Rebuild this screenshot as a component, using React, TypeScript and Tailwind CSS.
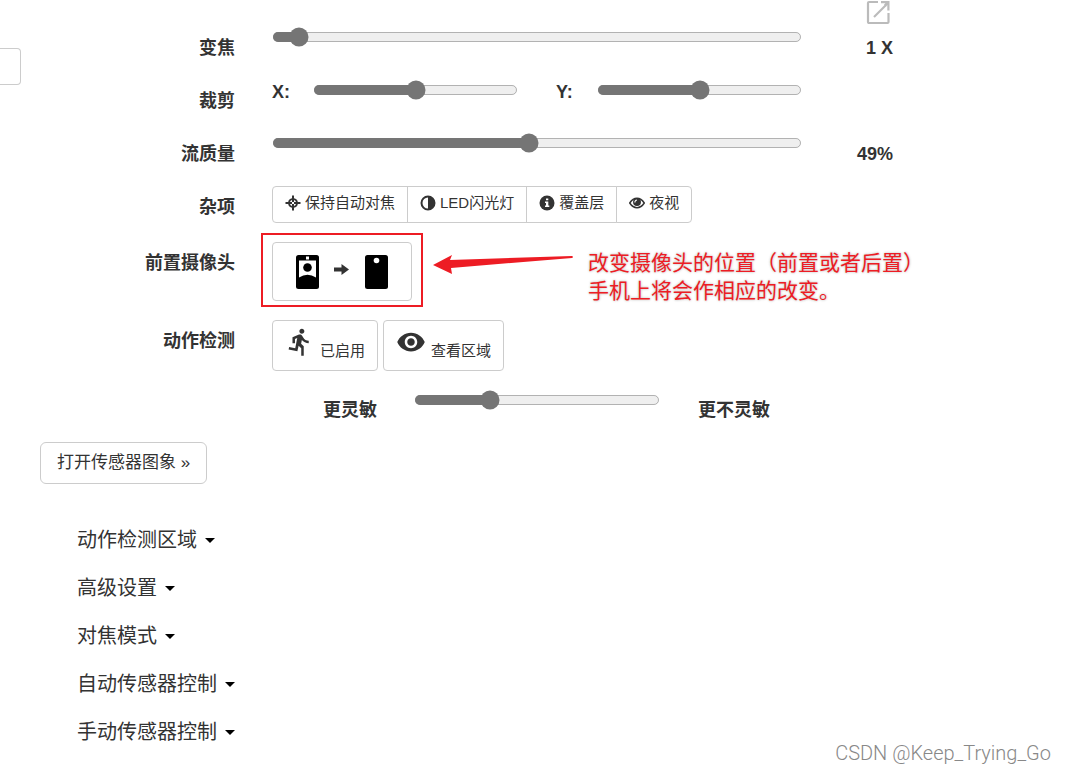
import { useState } from 'react'
import { MdDirectionsRun, MdVisibility } from 'react-icons/md'

const smallButton = 'flex items-center border border-[#ccc] bg-white px-3 pb-[3px] text-[15px] leading-5'

const menus = ['动作检测区域', '高级设置', '对焦模式', '自动传感器控制', '手动传感器控制']

function Slider({ label, id, initial }: { label?: string; id: string; initial: number }) {
  const [value, setValue] = useState(initial)
  return (
    <input
      id={id}
      type="range"
      min={0}
      max={100}
      step={0.1}
      aria-label={label}
      value={value}
      onChange={(e) => setValue(Number(e.target.value))}
      className="block h-4 w-full min-w-0 flex-1 accent-[#757575] [zoom:1.25]"
    />
  )
}

interface RowProps {
  label?: string
  htmlFor?: string
  value?: string
  children: React.ReactNode
}

function Row({ label, htmlFor, value, children }: RowProps) {
  return (
    <div className="flex min-h-[34px] items-start">
      <label htmlFor={htmlFor} className="w-[214px] shrink-0 pt-2 text-right text-[18px] leading-[26px] font-bold">
        {label}
      </label>
      <div className="ml-[37px] flex min-w-0 flex-1">{children}</div>
      <output className="mr-[172px] w-[91px] shrink-0 pt-2 text-right text-[18px] leading-[26px] font-bold">
        {value}
      </output>
    </div>
  )
}

function PopOutIcon() {
  return (
    <svg viewBox="0 0 24 24" className="size-6" fill="none" stroke="#bbb" strokeWidth="2.2">
      <path d="M12 2H3Q2 2 2 3V22Q2 23 3 23H21Q22.500 23 22.500 22V13" />
      <path d="M8 17L20 5" />
      <path d="M15 1h8.500v9.500h-2.200V5L20 6.500 18 4.500 19.500 3.200H15z" fill="#bbb" stroke="none" />
    </svg>
  )
}

function FocusIcon() {
  return (
    <svg viewBox="0 0 16 16" className="size-4" fill="currentColor">
      <path d="M7 0.500h2V3.200Q12.300 3.700 12.800 7H15.500v2h-2.700Q12.300 12.300 9 12.800v2.700H7v-2.700Q3.700 12.300 3.200 9H0.500V7h2.700Q3.700 3.700 7 3.200z" />
      <path d="M7 5v2H5Q5.400 5.400 7 5zM9 5Q10.600 5.400 11 7H9zM11 9Q10.600 10.600 9 11V9zM7 11Q5.400 10.600 5 9h2zM7 7h2v2H7z" fill="#fff" />
    </svg>
  )
}

function ContrastIcon() {
  return (
    <svg viewBox="0 0 16 16" className="size-4">
      <circle cx="8" cy="8" r="6.500" fill="none" stroke="currentColor" strokeWidth="2" />
      <path d="M8 1.500a6.500 6.500 0 0 1 0 13z" fill="currentColor" />
    </svg>
  )
}

function InfoIcon() {
  return (
    <svg viewBox="0 0 16 16" className="size-4">
      <circle cx="8" cy="8" r="7.500" fill="currentColor" />
      <path d="M7 3.500h2.300v1.800H7zM6 6.500h3.300v4h1V12H6v-1.500h1V8H6z" fill="#fff" />
    </svg>
  )
}

function EyeIcon() {
  return (
    <svg viewBox="0 0 17 16" className="h-4 w-4">
      <path d="M0.800 8Q4 3 8.500 3T16.200 8Q13 13 8.500 13T0.800 8z" fill="none" stroke="currentColor" strokeWidth="1.600" />
      <circle cx="8.500" cy="7" r="4.200" fill="currentColor" />
      <path d="M6.300 7.500a2.200 2.200 0 0 1 2-2.500" fill="none" stroke="#fff" strokeWidth="1.200" />
    </svg>
  )
}

function CameraSwapIcon() {
  return (
    <svg viewBox="0 0 92 36" className="h-9 w-[92px]">
      <rect x="0" y="1" width="23" height="34" rx="2.500" />
      <path d="M3 6.500h17v17Q11.500 18 3 23.500z" fill="#fff" />
      <rect x="10" y="2.500" width="3" height="3" fill="#fff" />
      <circle cx="11.500" cy="13.500" r="4.300" />
      <path d="M38 13.500h7.500V10l7.500 5.500-7.500 5.500v-3.500H38z" fill="#333" />
      <rect x="69" y="1" width="23" height="34" rx="2.500" />
      <circle cx="80.500" cy="6.500" r="2.800" fill="#fff" />
    </svg>
  )
}

export default function App() {
  return (
    <main className="flex min-h-screen flex-col overflow-x-hidden bg-white font-['Liberation_Sans','Noto_Sans_CJK_SC',sans-serif] text-[#333]">
      <div className="flex items-start">
        <div className="w-[21px] shrink-0 pt-12">
          <button aria-label="展开" className="block h-[37px] w-full rounded-r border border-l-0 border-[#ccc]" />
        </div>

        <section className="min-w-0 flex-1">
          <div className="flex h-[27px] justify-end pr-[175px]">
            <a href="#popout" aria-label="弹出">
              <PopOutIcon />
            </a>
          </div>

          <div className="flex flex-col gap-[19px]">
            <Row label="变焦" htmlFor="zoom" value="1 X">
              <Slider id="zoom" initial={3.4} />
            </Row>

            <Row label="裁剪">
              <div className="flex flex-1 gap-[38px]">
                <div className="flex flex-1 items-start">
                  <label htmlFor="crop-x" className="w-[41px] text-[18px] leading-6 font-bold">X:</label>
                  <Slider id="crop-x" initial={50} />
                </div>
                <div className="flex flex-1 items-start">
                  <label htmlFor="crop-y" className="w-[41px] text-[18px] leading-6 font-bold">Y:</label>
                  <Slider id="crop-y" initial={50} />
                </div>
              </div>
            </Row>

            <Row label="流质量" htmlFor="quality" value="49%">
              <Slider id="quality" initial={48.5} />
            </Row>

            <Row label="杂项">
              <div className="flex h-[37px] whitespace-nowrap">
                <button className={`${smallButton} gap-1 rounded-l`}><FocusIcon />保持自动对焦</button>
                <button className={`${smallButton} -ml-px gap-1`}><ContrastIcon />LED闪光灯</button>
                <button className={`${smallButton} -ml-px gap-1`}><InfoIcon />覆盖层</button>
                <button className={`${smallButton} -ml-px gap-1 rounded-r`}><EyeIcon />夜视</button>
              </div>
            </Row>

            <Row label="前置摄像头">
              <div className="relative">
                <button aria-label="切换摄像头" className="flex h-[59px] w-[140px] items-center justify-center rounded border border-[#ccc]">
                  <CameraSwapIcon />
                </button>
                <div className="pointer-events-none absolute -inset-x-[11px] -top-[9px] -bottom-[6px] border-2 border-[#ed1c24]" />
                <svg viewBox="0 0 140 20" className="absolute top-3 left-[161px] h-5 w-[140px]" fill="#ed1c24">
                  <path d="M0 11L19 1l-2 5L139 2q2 1 0 2L18 14l1 6z" />
                </svg>
                <p className="absolute top-[7px] left-[316px] text-[21px] leading-7 whitespace-nowrap text-[#ed1c24] [text-shadow:0_0_2px_#ccc,0_0_3px_#ccc]">
                  改变摄像头的位置（前置或者后置）
                  <br />
                  手机上将会作相应的改变。
                </p>
              </div>
            </Row>

            <Row label="动作检测">
              <div className="flex h-[51px] gap-[5px] text-[15px] leading-5 whitespace-nowrap">
                <button className="flex items-start gap-[5px] rounded border border-[#ccc] px-3">
                  <MdDirectionsRun className="mt-[6px] size-[30px]" />
                  <span className="mt-5">已启用</span>
                </button>
                <button className="flex items-start gap-[5px] rounded border border-[#ccc] px-3">
                  <MdVisibility className="mt-[6px] size-[30px]" />
                  <span className="mt-5">查看区域</span>
                </button>
              </div>
            </Row>

            <Row>
              <div className="flex flex-1 items-start text-[18px] leading-6 font-bold">
                <span className="w-[105px] pt-2 text-right">更灵敏</span>
                <div className="ml-[37px] flex min-w-0 flex-1">
                  <Slider id="sensitivity" label="灵敏度" initial={29} />
                </div>
                <span className="ml-[38px] w-[104px] pt-2">更不灵敏</span>
              </div>
            </Row>
          </div>
        </section>
      </div>

      <div className="px-10 pt-[18px]">
        <button className="h-[42px] rounded-md border border-[#ccc] px-4 text-[17px] leading-6">
          打开传感器图象 »
        </button>
      </div>

      <nav className="flex flex-col items-start px-[77px] pt-8 text-[20px]">
        {menus.map((name) => (
          <button key={name} className="flex h-12 items-center gap-2">
            {name}
            <svg viewBox="0 0 10 5" className="h-[5px] w-[10px]">
              <path d="M0 0h10L5 5z" fill="#000" />
            </svg>
          </button>
        ))}
      </nav>

      <footer className="pointer-events-none absolute right-[14px] bottom-2 font-[Roboto,sans-serif] text-[20px] leading-6 font-light text-[#888]">
        CSDN @Keep_Trying_Go
      </footer>
    </main>
  )
}
